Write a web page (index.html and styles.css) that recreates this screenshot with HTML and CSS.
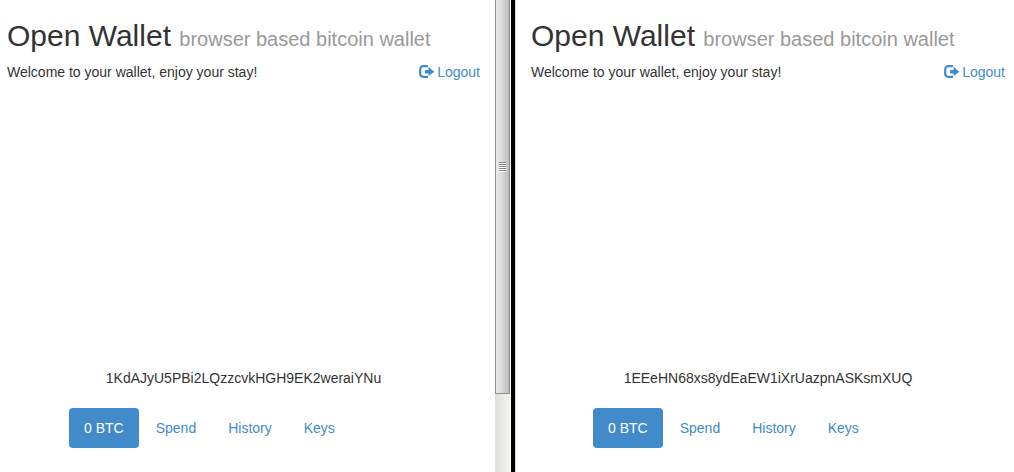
FILE: index.html
```html
<!DOCTYPE html>
<html lang="en">
<head>
<meta charset="utf-8">
<title>Open Wallet</title>
<link rel="stylesheet" href="styles.css">
</head>
<body>
<div class="desktop">
  <main class="wallet wallet-first">
    <h1 class="title">Open Wallet <small>browser based bitcoin wallet</small></h1>
    <div class="welcome">
      <p>Welcome to your wallet, enjoy your stay!</p>
      <a class="logout" href="#"><svg class="icon" viewBox="0 0 16 14" aria-hidden="true"><path d="M9 1.2H4.5Q1.2 1.2 1.2 4.5V8.5Q1.2 11.8 4.5 11.8H9" fill="none" stroke="currentColor" stroke-width="2.2"/><path d="M6 5H9.5V2L15.4 6.8L9.5 11V8.6H6Z" fill="currentColor"/></svg>Logout</a>
    </div>
    <p class="address">1KdAJyU5PBi2LQzzcvkHGH9EK2weraiYNu</p>
    <nav class="pills">
      <a class="pill active" href="#">0 BTC</a>
      <a class="pill" href="#">Spend</a>
      <a class="pill" href="#">History</a>
      <a class="pill" href="#">Keys</a>
    </nav>
  </main>
  <div class="scrollbar"><div class="thumb"><span class="grip"></span></div></div>
  <div class="divider"></div>
  <main class="wallet wallet-second">
    <h1 class="title">Open Wallet <small>browser based bitcoin wallet</small></h1>
    <div class="welcome">
      <p>Welcome to your wallet, enjoy your stay!</p>
      <a class="logout" href="#"><svg class="icon" viewBox="0 0 16 14" aria-hidden="true"><path d="M9 1.2H4.5Q1.2 1.2 1.2 4.5V8.5Q1.2 11.8 4.5 11.8H9" fill="none" stroke="currentColor" stroke-width="2.2"/><path d="M6 5H9.5V2L15.4 6.8L9.5 11V8.6H6Z" fill="currentColor"/></svg>Logout</a>
    </div>
    <p class="address">1EEeHN68xs8ydEaEW1iXrUazpnASKsmXUQ</p>
    <nav class="pills">
      <a class="pill active" href="#">0 BTC</a>
      <a class="pill" href="#">Spend</a>
      <a class="pill" href="#">History</a>
      <a class="pill" href="#">Keys</a>
    </nav>
  </main>
</div>
</body>
</html>
```
FILE: styles.css
```css
* { box-sizing: border-box; }
body {
  margin: 0;
  background: #fff;
  color: #333;
  font-family: "Liberation Sans", Arial, sans-serif;
  font-size: 14px;
  line-height: 20px;
}
p { margin: 0; }
a { color: #428bca; text-decoration: none; }
.desktop {
  display: grid;
  grid-template-columns: 495fr 16px 5px 498fr;
  min-height: 100vh;
}
.wallet { padding: 18px 15px 24px; min-width: 0; }
.wallet-first { padding-left: 7px; }
.wallet-second { padding-right: 9px; }
.title {
  margin: 0 0 8px;
  font-size: 30px;
  font-weight: 400;
  line-height: 36px;
}
.title small { font-size: 20px; line-height: 20px; color: #999; }
.welcome { display: flex; justify-content: space-between; }
.logout { display: flex; align-items: center; gap: 2px; }
.icon { width: 16px; height: 14px; }
.address { margin-top: 286px; text-align: center; }
.pills { display: flex; gap: 2px; margin: 20px 0 0 62px; }
.pill { padding: 10px 15px; border-radius: 4px; }
.pill.active { background: #428bca; color: #fff; }
.scrollbar {
  border-right: 1px solid #fff;
  background: linear-gradient(to right, #dededc, #f4f4f2);
}
.thumb {
  display: grid;
  justify-items: center;
  align-content: start;
  height: 394px;
  padding-top: 162px;
  border: solid #8c8c8c;
  border-width: 0 1px 1px;
  background: linear-gradient(to right, #e8e8e6, #dededc 40%, #bcbcba);
}
.grip {
  width: 7px;
  height: 10px;
  background: repeating-linear-gradient(#888 0 1px, #fff 1px 2px);
}
.divider { background: #000; border-right: 1px solid #ddd; }
```
